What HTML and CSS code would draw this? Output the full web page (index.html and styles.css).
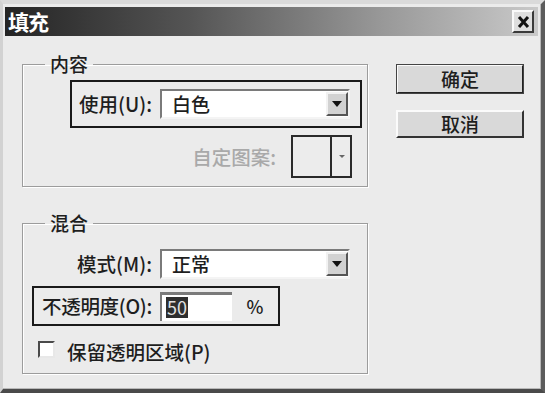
FILE: index.html
```html
<!DOCTYPE html>
<html lang="zh-CN">
<head>
    <meta charset="UTF-8">
    <title>填充</title>
    <link rel="stylesheet" href="styles.css">
</head>
<body>
    <div class="window">
        <div class="titlebar">
            <span class="title">填充</span>
            <button class="close">
                <svg width="13" height="12" viewBox="0 0 13 12">
                    <path d="M2 1 L11 11 M11 1 L2 11" stroke="#111" stroke-width="3" fill="none"/>
                </svg>
            </button>
        </div>

        <div class="content">
            <div class="main">
                <fieldset class="group group-content">
                    <legend>内容</legend>
                    <div class="hl hl-use">
                        <label class="lbl lbl-use">使用(U):</label>
                        <div class="select">
                            <span class="select-text">白色</span>
                            <span class="arrow"></span>
                        </div>
                    </div>
                    <div class="pattern-row">
                        <span class="lbl disabled">自定图案:</span>
                        <div class="swatch">
                            <span class="swatch-main"></span>
                            <span class="swatch-arrow"></span>
                        </div>
                    </div>
                </fieldset>

                <fieldset class="group group-blend">
                    <legend>混合</legend>
                    <div class="mode-row">
                        <label class="lbl lbl-use">模式(M):</label>
                        <div class="select">
                            <span class="select-text">正常</span>
                            <span class="arrow"></span>
                        </div>
                    </div>
                    <div class="hl hl-opacity">
                        <label class="lbl lbl-opacity">不透明度(O):</label>
                        <div class="num-input"><span class="sel">50</span></div>
                        <span class="unit">%</span>
                    </div>
                    <div class="check-row">
                        <span class="checkbox"></span>
                        <span class="check-label">保留透明区域(P)</span>
                    </div>
                </fieldset>
            </div>

            <div class="actions">
                <button class="button default">确定</button>
                <button class="button">取消</button>
            </div>
        </div>
    </div>
</body>
</html>
```

FILE: styles.css
```css
* {
    box-sizing: border-box;
}
body {
    margin: 0;
    background: #e4e4e4;
    font-family: "Noto Sans CJK SC", "Noto Sans", sans-serif;
    color: #1e1e1e;
}
.window {
    width: 545px;
    height: 393px;
    background: #ebebeb;
    border-top: 4px solid #dadada;
    border-left: 3px solid #d2d2d2;
    border-right: 4px solid #5c5c5c;
    border-bottom: 4px solid #4a4a4a;
    box-shadow: inset -1px -1px 0 #b8b8b8;
    padding-top: 3px;
}
.titlebar {
    height: 29px;
    margin: 0 3px 0 2px;
    background: linear-gradient(to right, #242424 0%, #555 35%, #979797 70%, #c9c9c9 100%);
    display: flex;
    align-items: center;
    justify-content: space-between;
    padding: 0 4px 0 3px;
}
.title {
    color: #fff;
    font-weight: bold;
    font-size: 21px;
    line-height: 29px;
    letter-spacing: -1px;
}
.close {
    width: 22px;
    height: 23px;
    padding: 0;
    background: #dedede;
    border: 2px solid;
    border-color: #fafafa #3a3a3a #3a3a3a #fafafa;
    display: flex;
    align-items: center;
    justify-content: center;
}
.content {
    display: flex;
    padding-left: 19px;
}
.main {
    width: 346px;
    padding-top: 17px;
}
.group {
    margin: 0;
    padding: 0;
    border: 1px solid #9c9c9c;
    box-shadow: inset 1px 1px 0 #fff, 1px 1px 0 #fff;
}
.group legend {
    margin-left: 22px;
    padding: 0 5px;
    font-size: 19px;
    font-weight: 500;
    line-height: 22px;
}
.group-content {
    padding-bottom: 1px;
}
.group-blend {
    margin-top: 25px;
    padding-bottom: 11px;
}
.lbl {
    font-size: 19.5px;
    font-weight: 500;
    line-height: 30px;
    white-space: nowrap;
}
.disabled {
    color: #a9a9a9;
}
.hl {
    display: flex;
    align-items: center;
    border: 2px solid #1a1a1a;
}
.hl-use {
    margin: 5px 0 0 47px;
    width: 292px;
    height: 48px;
    padding: 0 10px 0 4px;
    gap: 8px;
}
.lbl-use {
    flex: 1;
    text-align: right;
}
.select {
    width: 190px;
    height: 30px;
    background: #fff;
    border: 2px solid;
    border-color: #7a7a7a #f4f4f4 #f4f4f4 #7a7a7a;
    display: flex;
    align-items: center;
    justify-content: space-between;
    padding-left: 10px;
}
.select-text {
    font-size: 19px;
    font-weight: 500;
    line-height: 26px;
}
.arrow {
    width: 22px;
    height: 24px;
    background: #d2d2d2;
    border: 2px solid;
    border-color: #f2f2f2 #555 #555 #f2f2f2;
    position: relative;
}
.arrow::after {
    content: "";
    position: absolute;
    left: 4px;
    top: 7px;
    border-left: 5px solid transparent;
    border-right: 5px solid transparent;
    border-top: 6px solid #111;
}
.pattern-row {
    display: flex;
    justify-content: flex-end;
    align-items: center;
    gap: 15px;
    margin: 7px 15px 0 0;
    padding-bottom: 7px;
}
.swatch {
    width: 61px;
    height: 43px;
    display: flex;
    border: 2px solid #2a2a2a;
    background: #ececec;
}
.swatch-main {
    width: 39px;
    border-right: 2px solid #2a2a2a;
}
.swatch-arrow {
    flex: 1;
    position: relative;
}
.swatch-arrow::after {
    content: "";
    position: absolute;
    left: 7px;
    top: 18px;
    border-left: 3px solid transparent;
    border-right: 3px solid transparent;
    border-top: 3px solid #666;
}
.mode-row {
    display: flex;
    align-items: center;
    gap: 8px;
    margin: 15px 0 0 53px;
    width: 274px;
}
.hl-opacity {
    margin: 7px 0 0 9px;
    width: 248px;
    height: 40px;
    padding: 0 0 0 1px;
    gap: 8px;
}
.lbl-opacity {
    width: 117px;
    text-align: right;
    letter-spacing: -0.3px;
}
.num-input {
    width: 72px;
    height: 29px;
    background: #fff;
    border-top: 3px solid #7a7a7a;
    border-left: 2px solid #7a7a7a;
    display: flex;
    align-items: center;
    padding-left: 4px;
}
.sel {
    background: #2e2e2e;
    color: #e0e0e0;
    font-size: 18px;
    line-height: 21px;
    padding: 0 1px;
}
.unit {
    flex: 1;
    text-align: center;
    font-size: 18px;
    font-weight: 500;
    margin-left: -8px;
}
.check-row {
    display: flex;
    align-items: center;
    gap: 12px;
    margin: 10px 0 0 15px;
    height: 26px;
}
.checkbox {
    width: 17px;
    height: 17px;
    background: #fff;
    border: 2px solid;
    border-color: #4a4a4a #e8e8e8 #e8e8e8 #4a4a4a;
}
.check-label {
    font-size: 19.5px;
    font-weight: 500;
    line-height: 26px;
    padding-top: 5px;
}
.actions {
    margin-left: 28px;
    padding-top: 28px;
    display: flex;
    flex-direction: column;
    gap: 16px;
}
.button {
    width: 128px;
    height: 28px;
    background: #d9d9d9;
    border: 2px solid;
    border-color: #fbfbfb #333 #333 #fbfbfb;
    font-family: "Noto Sans CJK SC", sans-serif;
    font-size: 19px;
    font-weight: 500;
    line-height: 22px;
    color: #1e1e1e;
    padding: 0;
}
.button.default {
    height: 30px;
    outline: 1px solid #444;
    outline-offset: -1px;
    border-color: #fbfbfb #222 #222 #fbfbfb;
}
```
